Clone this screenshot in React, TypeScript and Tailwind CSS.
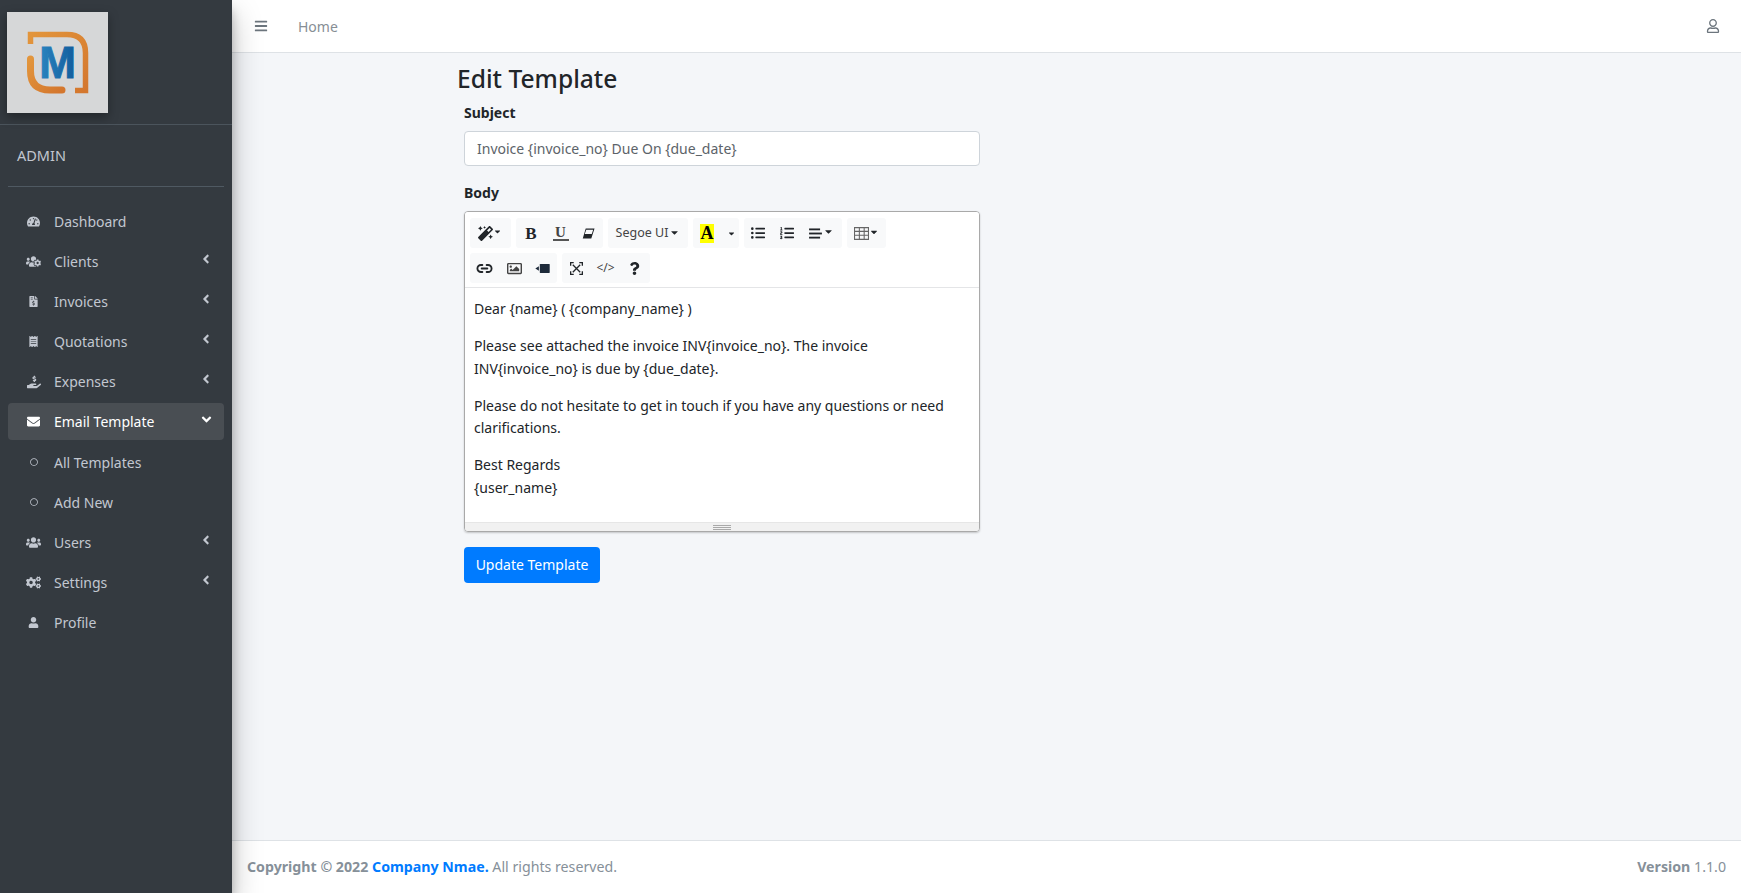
import type { ReactNode } from "react";
import { Link2 } from "lucide-react";
import {
  FaAngleDown,
  FaAngleLeft,
  FaBars,
  FaCaretDown,
  FaCogs,
  FaEnvelope,
  FaFileInvoiceDollar,
  FaHandHoldingUsd,
  FaListOl,
  FaListUl,
  FaMagic,
  FaQuestion,
  FaReceipt,
  FaRegCircle,
  FaRegImage,
  FaRegUser,
  FaTachometerAlt,
  FaUser,
  FaUsers,
  FaUsersCog,
} from "react-icons/fa";

/* ─── Sidebar ───────────────────────────────────────────────────────── */

type NavItem = {
  label: string;
  icon: ReactNode;
  arrow?: boolean;
  active?: boolean;
};

const navItems: NavItem[] = [
  { label: "Dashboard", icon: <FaTachometerAlt className="size-[13px]" /> },
  { label: "Clients", icon: <FaUsersCog className="size-[15px]" />, arrow: true },
  { label: "Invoices", icon: <FaFileInvoiceDollar className="size-[11px]" />, arrow: true },
  { label: "Quotations", icon: <FaReceipt className="size-[11px]" />, arrow: true },
  { label: "Expenses", icon: <FaHandHoldingUsd className="size-[14px]" />, arrow: true },
  { label: "Email Template", icon: <FaEnvelope className="size-[13px]" />, active: true },
  { label: "All Templates", icon: <FaRegCircle className="size-[8px]" /> },
  { label: "Add New", icon: <FaRegCircle className="size-[8px]" /> },
  { label: "Users", icon: <FaUsers className="size-[15px]" />, arrow: true },
  { label: "Settings", icon: <FaCogs className="size-[15px]" />, arrow: true },
  { label: "Profile", icon: <FaUser className="size-[11px]" /> },
];

function Logo() {
  return (
    <div className="size-[101px] bg-[#d6d7d8] shadow-[0_4px_10px_rgba(0,0,0,0.35)]">
      <svg viewBox="0 0 101 101" className="size-[101px]">
        <defs>
          <linearGradient id="logoOrange" x1="0" y1="0" x2="1" y2="1">
            <stop offset="0" stopColor="#e2953c" />
            <stop offset="1" stopColor="#d4772e" />
          </linearGradient>
          <linearGradient id="logoBlue" x1="0" y1="0" x2="1" y2="0">
            <stop offset="0" stopColor="#2a84c0" />
            <stop offset="1" stopColor="#125c9c" />
          </linearGradient>
        </defs>
        <path
          d="M23.5 32 V22.5 H60 Q78.5 22.5 78.5 41 V78.5 H68"
          fill="none"
          stroke="url(#logoOrange)"
          strokeWidth="5.5"
        />
        <path
          d="M23.5 47 V59 Q23.5 78 43 78 H55"
          fill="none"
          stroke="url(#logoOrange)"
          strokeWidth="7"
          strokeLinecap="round"
        />
        <text
          x="50.5"
          y="66"
          textAnchor="middle"
          fill="url(#logoBlue)"
          stroke="url(#logoBlue)"
          strokeWidth="1"
          className="font-['Liberation_Sans',sans-serif] text-[44px] font-bold"
        >
          M
        </text>
      </svg>
    </div>
  );
}

function Sidebar() {
  return (
    <aside className="z-10 flex h-full w-[232px] shrink-0 flex-col bg-[#343a40] text-[#c2c7d0] shadow-[0_14px_28px_rgba(0,0,0,0.25),0_10px_10px_rgba(0,0,0,0.22)]">
      <div className="h-[125px] border-b border-[#4b545c] pl-[7px] pt-[12px]">
        <Logo />
      </div>
      <div className="mx-[8px] flex h-[62px] items-center border-b border-[#4f5962] pl-[9px] text-[14.5px]">
        ADMIN
      </div>
      <nav className="mx-[8px] mt-[15.5px] flex flex-col gap-[3.2px]">
        {navItems.map((item) => (
          <div
            key={item.label}
            className={
              item.active
                ? "flex h-[37px] items-center rounded bg-[#494e53] text-white"
                : "flex h-[37px] items-center rounded"
            }
          >
            <span className="flex w-[46px] shrink-0 justify-center pl-[5px]">{item.icon}</span>
            <span className="text-[14px]">{item.label}</span>
            {item.arrow && <FaAngleLeft className="mb-[5px] ml-auto mr-[11px] size-[14px]" />}
            {item.active && <FaAngleDown className="mb-[5px] ml-auto mr-[10px] size-[15px]" />}
          </div>
        ))}
      </nav>
    </aside>
  );
}

/* ─── Editor toolbar ────────────────────────────────────────────────── */

function Group({ className, children }: { className: string; children: ReactNode }) {
  return (
    <div className={`flex h-[30px] items-center rounded-[3px] bg-[#f8f9fa] text-[#212529] ${className}`}>
      {children}
    </div>
  );
}

function Toolbar() {
  return (
    <div className="flex flex-col gap-[5px] border-b border-[#e4e5e7] bg-white pb-[4px] pl-[5px] pt-[6px]">
      <div className="flex gap-[5px]">
        <Group className="w-[41px] pl-[8px]">
          <FaMagic className="size-[15px]" />
          <FaCaretDown className="mb-[3px] size-[9px]" />
        </Group>
        <Group className="w-[87px] justify-between pl-[7px] pr-[8px]">
          <span className="w-[16px] text-center font-['Liberation_Serif',serif] text-[17px] font-bold leading-none">B</span>
          <span className="w-[16px] border-b-[2px] border-[#555] text-center font-['Liberation_Serif',serif] text-[15px] font-bold leading-[13px] text-[#444]">
            U
          </span>
          <svg viewBox="0 0 14 14" className="size-[13px]" fill="#212529">
            <path d="M4 1.5h9.5L10 12.5H.8zM4.6 3 3 7.5h7.5L12 3z" fillRule="evenodd" />
          </svg>
        </Group>
        <Group className="w-[80px] justify-center">
          <span className="flex items-center gap-[1px] text-[12.5px] text-[#444]">
            Segoe UI
            <FaCaretDown className="mb-[2px] size-[11px] text-[#212529]" />
          </span>
        </Group>
        <Group className="w-[46px] pl-[7px]">
          <span className="flex items-center gap-[13px]">
            <span className="flex h-[19px] w-[14px] items-center justify-center bg-[#ffff00] font-['Liberation_Serif',serif] text-[18px] font-bold text-black">
              A
            </span>
            <FaCaretDown className="size-[9px]" />
          </span>
        </Group>
        <Group className="w-[98px] justify-between pl-[7px] pr-[8px]">
          <FaListUl className="size-[14px]" />
          <FaListOl className="size-[14px]" />
          <span className="flex items-center gap-[1px]">
            <svg viewBox="0 0 14 12" className="h-[11px] w-[13px]" fill="#212529">
              <rect width="12" height="2" y="0.5" />
              <rect width="14" height="2" y="5" />
              <rect width="12" height="2" y="9.5" />
            </svg>
            <FaCaretDown className="mb-[3px] size-[11px]" />
          </span>
        </Group>
        <Group className="w-[39px] justify-center">
          <svg viewBox="0 0 14 14" className="size-[15px]" fill="none" stroke="#666" strokeWidth="1">
            <path d="M.5 1.5h13v11H.5zM.5 5h13M.5 8.7h13M5 1.5v11M9.5 1.5v11" />
          </svg>
          <FaCaretDown className="mb-[3px] size-[10px]" />
        </Group>
      </div>
      <div className="flex gap-[5px]">
        <Group className="w-[87px] justify-between pl-[6px] pr-[7px]">
          <Link2 className="size-[17px]" strokeWidth={2.6} />
          <FaRegImage className="size-[15px] text-[#444]" />
          <svg viewBox="0 0 16 10" className="h-[9px] w-[15px]" fill="#1d2a3a">
            <rect x="5" width="11" height="10" rx="0.5" />
            <path d="M0 5l4-2.5v5z" />
          </svg>
        </Group>
        <Group className="w-[88px] justify-between pl-[8px] pr-[9px]">
          <svg viewBox="0 0 14 14" className="size-[13px]" fill="none" stroke="#212529" strokeWidth="1.4">
            <path d="M3 3l8 8M11 3l-8 8" />
            <path d="M.5 4V.5H4M10 .5h3.5V4M.5 10v3.5H4M10 13.5h3.5V10" strokeWidth="1.8" />
          </svg>
          <span className="text-[12px] text-[#444]">&lt;/&gt;</span>
          <FaQuestion className="size-[13px]" />
        </Group>
      </div>
    </div>
  );
}

function Editor() {
  return (
    <div className="overflow-hidden rounded-[4px] border border-[#a9a9a9] shadow-[0_1px_2px_rgba(0,0,0,0.2)]">
      <Toolbar />
      <div className="h-[234px] bg-white px-[9px] pt-[10px] text-[14px] leading-[22.5px] text-[#212529]">
        <p className="mb-[14.5px]">{"Dear {name} ( {company_name} )"}</p>
        <p className="mb-[14.5px]">
          {"Please see attached the invoice INV{invoice_no}. The invoice INV{invoice_no} is due by {due_date}."}
        </p>
        <p className="mb-[14.5px]">
          Please do not hesitate to get in touch if you have any questions or need clarifications.
        </p>
        <p>Best Regards</p>
        <p>{"{user_name}"}</p>
      </div>
      <div className="flex h-[9px] flex-col items-center justify-center gap-[1px] border-t border-[#e6e6e6] bg-[#f1f1f1]">
        <div className="h-px w-[18px] bg-[#a9a9a9]" />
        <div className="h-px w-[18px] bg-[#a9a9a9]" />
        <div className="h-px w-[18px] bg-[#a9a9a9]" />
      </div>
    </div>
  );
}

/* ─── Page ──────────────────────────────────────────────────────────── */

export default function App() {
  return (
    <div className="flex h-screen w-full overflow-hidden bg-[#f4f6f9] font-['Noto_Sans',sans-serif]">
      <Sidebar />
      <div className="flex min-w-0 flex-1 flex-col">
        <header className="flex h-[53px] shrink-0 items-center border-b border-[#dee2e6] bg-white pl-[22px] pr-[21px] text-[#6c757d]">
          <FaBars className="size-[14px]" />
          <span className="ml-[30px] text-[14px] text-[#878e95]">Home</span>
          <FaRegUser className="ml-auto size-[14px]" />
        </header>

        <main className="flex-1 pl-[225px]">
          <h1 className="h-[48px] pt-[10px] text-[24.6px] font-medium leading-[32px] text-[#212529]">Edit Template</h1>
          <form className="box-content w-[516px] pl-[7px]">
            <label className="block pt-[1px] text-[14px] font-bold leading-[22px] text-[#212529]">Subject</label>
            <input
              readOnly
              value="Invoice {invoice_no} Due On {due_date}"
              className="mt-[7px] block h-[35px] w-[516px] rounded border border-[#ced4da] bg-white px-[12px] text-[14px] text-[#5c6369] outline-none"
            />
            <label className="mt-[16px] block text-[14px] font-bold leading-[22px] text-[#212529]">Body</label>
            <div className="mt-[7px] w-[516px]">
              <Editor />
            </div>
            <button
              type="button"
              className="mt-[15px] h-[36px] w-[136px] rounded bg-[#007bff] pb-[1px] text-[14px] text-white"
            >
              Update Template
            </button>
          </form>
        </main>

        <footer className="flex h-[53px] shrink-0 items-center justify-between border-t border-[#dee2e6] bg-white pl-[15px] pr-[15px] text-[14.2px] text-[#869099]">
          <span>
            <strong className="font-bold">
              Copyright © 2022 <span className="text-[#007bff]">Company Nmae.</span>
            </strong>{" "}
            All rights reserved.
          </span>
          <span>
            <strong className="font-bold">Version</strong> 1.1.0
          </span>
        </footer>
      </div>
    </div>
  );
}
